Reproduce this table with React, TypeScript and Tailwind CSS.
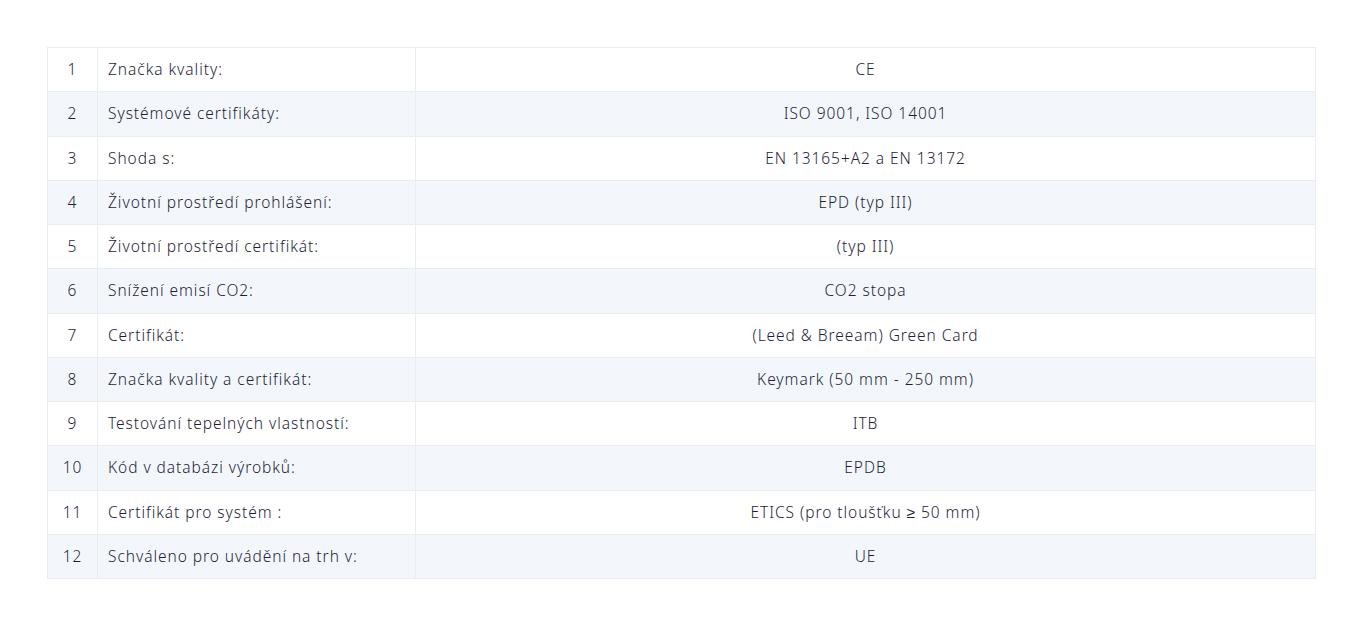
const rows = [
  ['Značka kvality:', 'CE'],
  ['Systémové certifikáty:', 'ISO 9001, ISO 14001'],
  ['Shoda s:', 'EN 13165+A2 a EN 13172'],
  ['Životní prostředí prohlášení:', 'EPD (typ III)'],
  ['Životní prostředí certifikát:', '(typ III)'],
  ['Snížení emisí CO2:', 'CO2 stopa'],
  ['Certifikát:', '(Leed & Breeam) Green Card'],
  ['Značka kvality a certifikát:', 'Keymark (50 mm - 250 mm)'],
  ['Testování tepelných vlastností:', 'ITB'],
  ['Kód v databázi výrobků:', 'EPDB'],
  ['Certifikát pro systém :', 'ETICS (pro tloušťku ≥ 50 mm)'],
  ['Schváleno pro uvádění na trh v:', 'UE'],
];

export default function App() {
  return (
    <div className="min-h-screen bg-white pt-[47px] pl-[47px] font-['Noto_Sans',sans-serif] text-[15.5px] font-light tracking-[0.95px] text-[#1f1e38]">
      <table className="w-[1269px] border-collapse table-fixed">
        <colgroup>
          <col className="w-[50px]" />
          <col className="w-[318px]" />
          <col />
        </colgroup>
        <tbody>
          {rows.map(([label, value], i) => (
            <tr key={i} className={i % 2 === 1 ? 'bg-[#f3f7fb]' : 'bg-white'}>
              <td className="h-[44.25px] border border-[#eaedf0] text-center">{i + 1}</td>
              <td className="h-[44.25px] border border-[#eaedf0] px-[10px]">{label}</td>
              <td className="h-[44.25px] border border-[#eaedf0] text-center">{value}</td>
            </tr>
          ))}
        </tbody>
      </table>
    </div>
  );
}
